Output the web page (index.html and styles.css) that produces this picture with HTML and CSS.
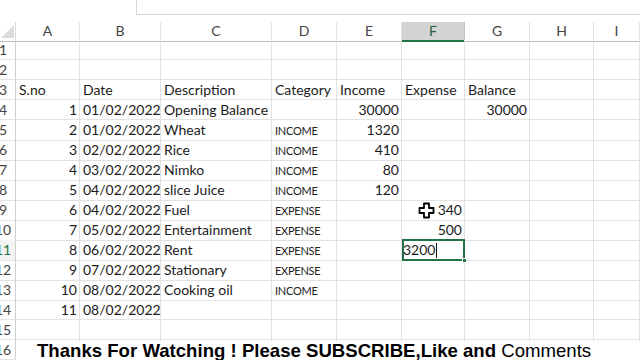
FILE: index.html
```html
<!DOCTYPE html>
<html>
<head>
<meta charset="utf-8">
<link rel="stylesheet" href="styles.css">
</head>
<body>
<div class="app">
  <div class="topbar"><div class="fx"></div></div>
  <div class="sheet">
    <div class="row head">
      <div class="corner"><span class="tri"></span></div>
      <div class="ch">A</div><div class="ch">B</div><div class="ch">C</div><div class="ch">D</div><div class="ch">E</div><div class="ch sel">F</div><div class="ch">G</div><div class="ch">H</div><div class="ch">I</div>
    </div>
    <div class="row"><div class="rh"><span>1</span></div><div class="c"></div><div class="c"></div><div class="c"></div><div class="c"></div><div class="c"></div><div class="c"></div><div class="c"></div><div class="c"></div><div class="c"></div></div>
    <div class="row"><div class="rh"><span>2</span></div><div class="c"></div><div class="c"></div><div class="c"></div><div class="c"></div><div class="c"></div><div class="c"></div><div class="c"></div><div class="c"></div><div class="c"></div></div>
    <div class="row"><div class="rh"><span>3</span></div><div class="c">S.no</div><div class="c">Date</div><div class="c">Description</div><div class="c">Category</div><div class="c">Income</div><div class="c">Expense</div><div class="c">Balance</div><div class="c"></div><div class="c"></div></div>
    <div class="row"><div class="rh"><span>4</span></div><div class="c n">1</div><div class="c">01/02/2022</div><div class="c">Opening Balance</div><div class="c"></div><div class="c n">30000</div><div class="c"></div><div class="c n">30000</div><div class="c"></div><div class="c"></div></div>
    <div class="row"><div class="rh"><span>5</span></div><div class="c n">2</div><div class="c">01/02/2022</div><div class="c">Wheat</div><div class="c cat">INCOME</div><div class="c n">1320</div><div class="c"></div><div class="c"></div><div class="c"></div><div class="c"></div></div>
    <div class="row"><div class="rh"><span>6</span></div><div class="c n">3</div><div class="c">02/02/2022</div><div class="c">Rice</div><div class="c cat">INCOME</div><div class="c n">410</div><div class="c"></div><div class="c"></div><div class="c"></div><div class="c"></div></div>
    <div class="row"><div class="rh"><span>7</span></div><div class="c n">4</div><div class="c">03/02/2022</div><div class="c">Nimko</div><div class="c cat">INCOME</div><div class="c n">80</div><div class="c"></div><div class="c"></div><div class="c"></div><div class="c"></div></div>
    <div class="row"><div class="rh"><span>8</span></div><div class="c n">5</div><div class="c">04/02/2022</div><div class="c">slice Juice</div><div class="c cat">INCOME</div><div class="c n">120</div><div class="c"></div><div class="c"></div><div class="c"></div><div class="c"></div></div>
    <div class="row"><div class="rh"><span>9</span></div><div class="c n">6</div><div class="c">04/02/2022</div><div class="c">Fuel</div><div class="c cat">EXPENSE</div><div class="c"></div><div class="c n">340</div><div class="c"></div><div class="c"></div><div class="c"></div></div>
    <div class="row"><div class="rh"><span>10</span></div><div class="c n">7</div><div class="c">05/02/2022</div><div class="c">Entertainment</div><div class="c cat">EXPENSE</div><div class="c"></div><div class="c n">500</div><div class="c"></div><div class="c"></div><div class="c"></div></div>
    <div class="row"><div class="rh active"><span>11</span></div><div class="c n">8</div><div class="c">06/02/2022</div><div class="c">Rent</div><div class="c cat">EXPENSE</div><div class="c"></div><div class="c editing">3200<span class="caret"></span><span class="handle"></span></div><div class="c"></div><div class="c"></div><div class="c"></div></div>
    <div class="row"><div class="rh"><span>12</span></div><div class="c n">9</div><div class="c">07/02/2022</div><div class="c">Stationary</div><div class="c cat">EXPENSE</div><div class="c"></div><div class="c"></div><div class="c"></div><div class="c"></div><div class="c"></div></div>
    <div class="row"><div class="rh"><span>13</span></div><div class="c n">10</div><div class="c">08/02/2022</div><div class="c">Cooking oil</div><div class="c cat">INCOME</div><div class="c"></div><div class="c"></div><div class="c"></div><div class="c"></div><div class="c"></div></div>
    <div class="row"><div class="rh"><span>14</span></div><div class="c n">11</div><div class="c">08/02/2022</div><div class="c"></div><div class="c"></div><div class="c"></div><div class="c"></div><div class="c"></div><div class="c"></div><div class="c"></div></div>
    <div class="row"><div class="rh"><span>15</span></div><div class="c"></div><div class="c"></div><div class="c"></div><div class="c"></div><div class="c"></div><div class="c"></div><div class="c"></div><div class="c"></div><div class="c"></div></div>
    <div class="row"><div class="rh"><span>16</span></div><div class="c"></div><div class="c"></div><div class="c"></div><div class="c"></div><div class="c"></div><div class="c"></div><div class="c"></div><div class="c"></div><div class="c"></div></div>
  </div>
  <div class="banner"><b>Thanks For Watching ! Please SUBSCRIBE,Like and</b> Comments</div>
  <svg class="pointer" width="18" height="18" viewBox="0 0 18 18">
    <path d="M6 1.5h5v4.5h4.5v5H11v4.5H6V11H1.5V6H6z" fill="#fff" stroke="#000" stroke-width="1.8" stroke-linejoin="round"/>
  </svg>
</div>
</body>
</html>
```

FILE: styles.css
```css
* { box-sizing: border-box; }
html, body { margin: 0; padding: 0; background: #fff; }
body { width: 640px; height: 360px; overflow: hidden; font-family: Lato, "Open Sans", sans-serif; color: #1b1b1b; }
.app { position: relative; width: 640px; height: 360px; overflow: hidden; }

.topbar { height: 22px; display: flex; justify-content: flex-end; }
.fx { width: 504px; height: 15px; border: 1px solid #d6d6d6; border-top: none; border-right: none; }

.sheet { width: 700px; }
.row {
  display: grid;
  grid-template-columns: 16px 64px 81px 111px 65px 65px 63px 65px 64px 46px;
  height: 20px;
}
.row.head { height: 18px; }

.corner { position: relative; border-right: 1px solid #dadada; border-bottom: 1px solid #bdbdbd; }
.tri { position: absolute; right: 1px; bottom: 3px; width: 0; height: 0; border-left: 13px solid transparent; border-bottom: 13px solid #dcdcdc; }
.ch {
  border-right: 1px solid #e2e2e2; border-bottom: 1px solid #bdbdbd;
  text-align: center; font-size: 14px; line-height: 18px; color: #444;
}
.ch.sel { background: #d3d3d3; border-bottom: 2px solid #217346; color: #1e5e3a; border-right-color: #c4c4c4; }

.rh {
  border-right: 1px solid #d0d0d0; border-bottom: 1px solid #e2e2e2;
  overflow: hidden; font-size: 14px; line-height: 20px; color: #444;
}
.rh span { display: block; width: 26px; margin-left: -10px; text-align: center; }
.rh.active { color: #217346; background: #f3f3f3; }

.c {
  border-right: 1px solid #e2e2e2; border-bottom: 1px solid #e2e2e2;
  font-size: 14px; line-height: 19px; padding: 0 3px; white-space: nowrap; overflow: visible;
}
.c.n { text-align: right; padding-right: 2px; }
.c.cat { font-size: 11px; padding-left: 3px; padding-top: 1px; color: #222; letter-spacing: -0.25px; }

.c.editing {
  position: relative; padding-left: 1px;
}
.c.editing::before {
  content: ""; position: absolute; left: 0; top: -1px; right: -1px; bottom: -1px;
  border: 2px solid #217346;
}
.caret { display: inline-block; width: 1px; height: 15px; background: #111; vertical-align: -3px; margin-left: 1px; }
.handle { position: absolute; right: -3px; bottom: -3px; width: 5px; height: 5px; background: #217346; border: 1px solid #fff; }

.banner {
  position: absolute; left: 16px; right: 0; top: 341px; height: 19px;
  background: #fff; padding-left: 21px;
  font-family: "Liberation Sans", Arial, sans-serif; font-size: 18.6px; line-height: 20px; color: #000; white-space: nowrap;
}
.banner b { font-weight: 700; }

.pointer { position: absolute; left: 418px; top: 202px; }
```
